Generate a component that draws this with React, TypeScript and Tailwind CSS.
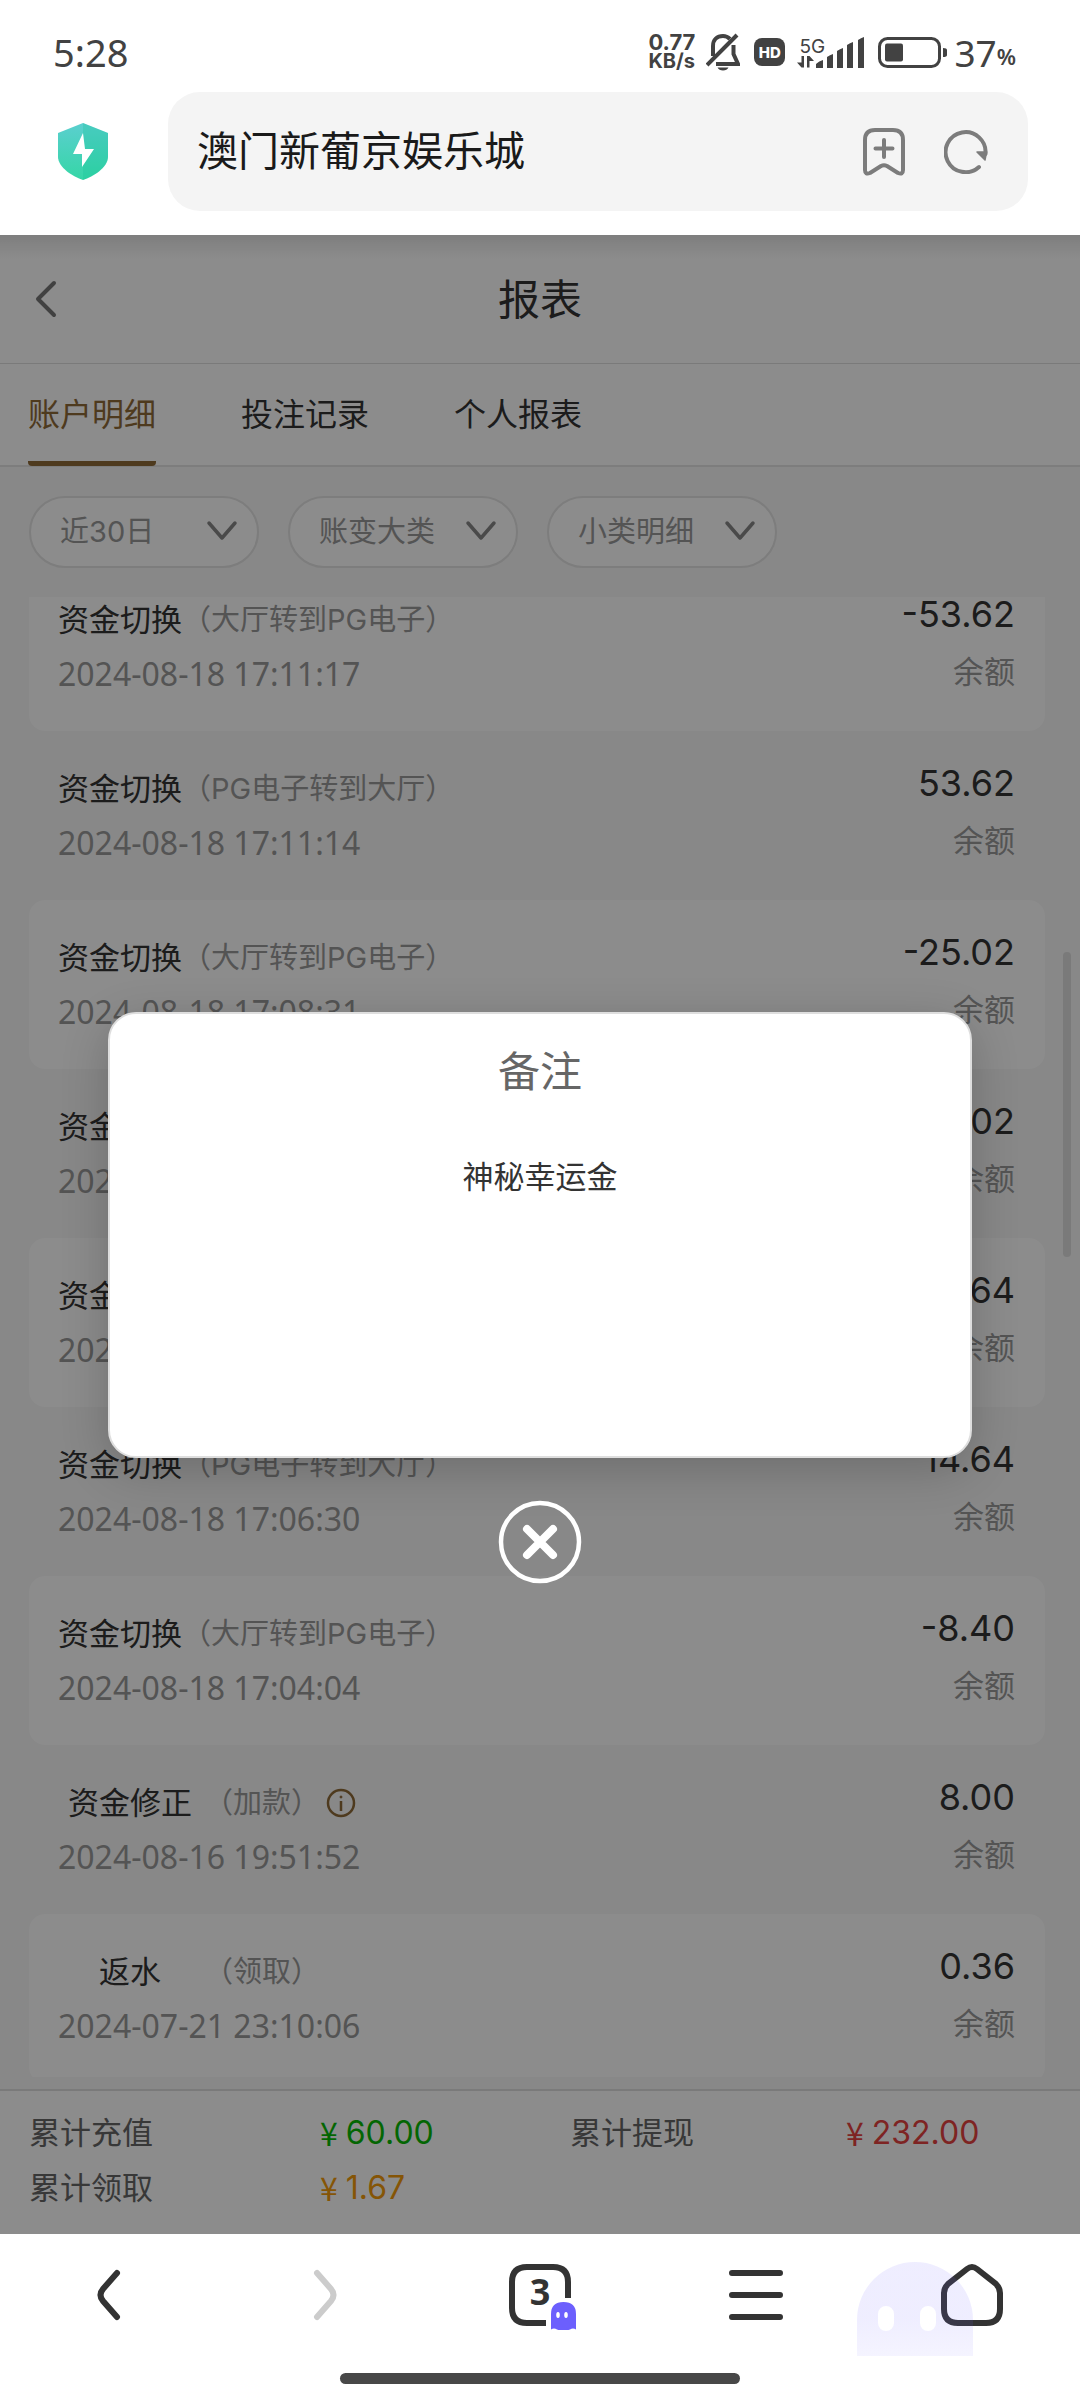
import clsx from 'clsx';
import { useState } from 'react';

type Transaction = {
  title: string;
  detail: string;
  time: string;
  amount: string;
  wide?: boolean;
  info?: boolean;
};

const tabs = ['账户明细', '投注记录', '个人报表'];

const filters = [
  { label: '时间', value: '近30日' },
  { label: '大类', value: '账变大类' },
  { label: '小类', value: '小类明细' },
];

const transactions: Transaction[] = [
  { title: '资金切换', detail: '（大厅转到PG电子）', time: '2024-08-18 17:11:17', amount: '-53.62' },
  { title: '资金切换', detail: '（PG电子转到大厅）', time: '2024-08-18 17:11:14', amount: '53.62' },
  { title: '资金切换', detail: '（大厅转到PG电子）', time: '2024-08-18 17:08:31', amount: '-25.02' },
  { title: '资金切换', detail: '（PG电子转到大厅）', time: '2024-08-18 17:08:28', amount: '25.02' },
  { title: '资金切换', detail: '（大厅转到PG电子）', time: '2024-08-18 17:06:33', amount: '-14.64' },
  { title: '资金切换', detail: '（PG电子转到大厅）', time: '2024-08-18 17:06:30', amount: '14.64' },
  { title: '资金切换', detail: '（大厅转到PG电子）', time: '2024-08-18 17:04:04', amount: '-8.40' },
  { title: '资金修正', detail: '（加款）', time: '2024-08-16 19:51:52', amount: '8.00', wide: true, info: true },
  { title: '返水', detail: '（领取）', time: '2024-07-21 23:10:06', amount: '0.36', wide: true },
];

const totals = [
  { label: '累计充值', value: '60.00', color: 'text-[#09bb07]' },
  { label: '累计提现', value: '232.00', color: 'text-[#e64340]' },
  { label: '累计领取', value: '1.67', color: 'text-[#f39b0c]' },
];

function StatusBar() {
  return (
    <div className="flex h-[92px] items-center justify-between pt-3 pr-16 pl-[53px] text-[#424242]">
      <time className="font-['Noto_Sans',sans-serif] text-[38px] leading-none">5:28</time>
      <div className="flex items-center">
        <div className="w-[58px] font-bold">
          <div className="text-[22px] leading-[19px]">0.77</div>
          <div className="text-[20px] leading-[19px]">KB/s</div>
        </div>
        <svg className="h-[38px] w-[34px]" viewBox="0 0 34 38" fill="none" stroke="currentColor" strokeWidth="4">
          <path d="M7 23V13C7 7 11 3 17 3c3 0 5 1 7 3" />
          <path d="M1 32 31 2" />
          <path d="M27.500 12v9l4.500 10H10" />
          <path d="M11.500 34.500h11q-1.500 3-5.500 3t-5.500-3z" fill="currentColor" stroke="none" />
        </svg>
        <div className="mr-3 ml-3.5 flex h-7 w-[31px] items-center justify-center rounded-lg bg-[#424242] text-[15px] leading-none font-extrabold text-white">
          HD
        </div>
        <div className="flex items-end">
          <div className="flex w-[19px] flex-col">
            <span className="pl-0.5 text-[19px] leading-[19px]">5G</span>
            <svg className="h-3 w-[17px]" viewBox="0 0 17 12" fill="currentColor">
              <path d="M4.500 0h2.500v11.500H4.500L0 6.500h4.500zM10 0h2.500l4.500 5h-4.500v6.500H10z" />
            </svg>
          </div>
          <svg className="h-[31px] w-12" viewBox="0 0 48 31" fill="currentColor">
            <path d="M0 27q3-3 7-4v8H0zM11 20q3-2 6-3v14h-6zM21 14q3-2 6-3v20h-6zM31 8q3-2 6-3v26h-6zM42 3q3-2 6-3v31h-6z" />
          </svg>
        </div>
        <svg className="ml-3.5 h-[31px] w-[70px]" viewBox="0 0 70 31" fill="currentColor">
          <rect x="1.500" y="1.500" width="60" height="28" rx="8" fill="none" stroke="currentColor" strokeWidth="3" />
          <rect x="7" y="6.500" width="18" height="18" rx="2" />
          <path d="M65 11q4 0 4 2v5q0 2-4 2z" />
        </svg>
        <span className="ml-1.5 font-['Noto_Sans',sans-serif] text-[37px] leading-none">37</span>
        <span className="self-end font-['Noto_Sans',sans-serif] text-[22px] leading-[30px] font-semibold">%</span>
      </div>
    </div>
  );
}

function AddressBar() {
  return (
    <div className="flex items-center pr-[52px] pb-6">
      <svg className="mx-[58px] h-[57px] w-[52px] shrink-0" viewBox="0 0 52 57">
        <defs>
          <linearGradient id="shield" x1="0" y1="0" x2="0" y2="1">
            <stop offset="0" stopColor="#5bcfcf" />
            <stop offset="1" stopColor="#35d6a6" />
          </linearGradient>
        </defs>
        <path d="M25 0 50 10v24c0 10-15 20-25 23C15 54 0 44 0 34V10z" fill="url(#shield)" />
        <path d="M25 0 50 10v24c0 10-15 20-25 23z" fill="#0fbf94" fillOpacity=".25" />
        <path d="M25 10 15 31h9v13l12-18h-9z" fill="#fff" />
      </svg>
      <div className="flex h-[119px] flex-1 items-center rounded-[32px] bg-[#f4f4f4] pr-10 pl-[29px] text-[#7c7c7c]">
        <input
          aria-label="地址栏"
          className="min-w-0 flex-1 bg-transparent text-[41px] text-[#1a1a1a] outline-none"
          defaultValue="澳门新葡京娱乐城"
        />
        <button aria-label="添加书签">
          <svg className="h-12 w-[42px]" viewBox="0 0 42 48" fill="none" stroke="currentColor" strokeWidth="4" strokeLinecap="round">
            <path
              strokeLinejoin="round"
              d="M2 12Q2 2 12 2H30Q40 2 40 12V42Q40 47 35 45L24 38Q21 36.500 18 38L7 45Q2 47 2 42z"
            />
            <path d="M21 12v17M12.500 20.500h17" />
          </svg>
        </button>
        <button aria-label="刷新" className="ml-[39px]">
          <svg className="h-11 w-11" viewBox="0 0 44 44" fill="none" stroke="currentColor" strokeWidth="4" strokeLinecap="round">
            <path d="M35 37A20 20 0 1 1 41.500 24" />
            <path d="M33 22h9.500l-1.500 8z" fill="currentColor" strokeWidth="1.500" strokeLinejoin="round" />
          </svg>
        </button>
      </div>
    </div>
  );
}

function Filter({ label, value }: { label: string; value: string }) {
  return (
    <div className="relative h-[72px] w-[230px]">
      <select
        aria-label={label}
        className="h-full w-full appearance-none rounded-full border-2 border-[#e3e3e3] bg-white pl-[29px] text-[29px] text-[#999] outline-none"
        defaultValue={value}
      >
        <option>{value}</option>
      </select>
      <svg
        className="pointer-events-none absolute top-6 right-[21px] h-[22px] w-8 text-[#888]"
        viewBox="0 0 32 22"
        fill="none"
        stroke="currentColor"
        strokeWidth="3.500"
        strokeLinecap="round"
        strokeLinejoin="round"
      >
        <path d="M3 3 16 18 29 3" />
      </svg>
    </div>
  );
}

function TransactionRow({ item, odd }: { item: Transaction; odd: boolean }) {
  return (
    <li className={clsx('flex justify-between rounded-2xl pr-[30px] pl-[29px]', odd && 'bg-white')}>
      <div className="pt-[31px] pb-[30px]">
        <div className="flex items-center leading-[53px]">
          <span className={clsx('text-[31px] text-[#333]', item.wide && 'mr-0.5 w-36 text-center')}>{item.title}</span>
          <span className="text-[29px] text-[#999]">{item.detail}</span>
          {item.info && (
            <button aria-label="备注" className="ml-1.5">
              <svg className="h-[30px] w-[30px] text-[#8f6a38]" viewBox="0 0 30 30" fill="none" stroke="currentColor" strokeWidth="2.500">
                <circle cx="15" cy="15" r="13" />
                <path d="M15 13v10" />
                <circle cx="15" cy="9" r="1" fill="currentColor" strokeWidth="1" />
              </svg>
            </button>
          )}
        </div>
        <time className="block font-['Noto_Sans',sans-serif] text-[32px] leading-[55px] text-[#999]">{item.time}</time>
      </div>
      <div className="pt-[23px] text-right leading-[58px]">
        <div className="text-[36px] text-[#333]">{item.amount}</div>
        <div className="text-[31px] text-[#999]">余额</div>
      </div>
    </li>
  );
}

function RemarkDialog({ onClose }: { onClose: () => void }) {
  return (
    <div className="absolute inset-0 flex items-center justify-center bg-black/45">
      <div
        role="dialog"
        aria-labelledby="remark-title"
        className="relative min-h-[446px] w-4/5 rounded-[28px] border-2 border-[#dedede] bg-white text-center shadow-[0_12px_48px_rgba(0,0,0,0.2)]"
      >
        <h2 id="remark-title" className="pt-[29px] text-[42px] leading-[58px] text-[#666]">
          备注
        </h2>
        <p className="pt-[52px] text-[31px] leading-[48px] text-[#333]">神秘幸运金</p>
        <div className="absolute top-full right-0 left-0 flex justify-center pt-11">
          <button aria-label="关闭" onClick={onClose}>
            <svg className="h-[84px] w-[84px] text-white" viewBox="0 0 84 84" fill="none" stroke="currentColor" strokeLinecap="round">
              <circle cx="42" cy="42" r="39" strokeWidth="4.500" />
              <path d="M29 29 55 55M55 29 29 55" strokeWidth="8" />
            </svg>
          </button>
        </div>
      </div>
    </div>
  );
}

function BrowserNav() {
  return (
    <nav className="bg-white pb-4 text-[#333]">
      <div className="grid h-[139px] grid-cols-5 justify-items-center pb-[17px]">
        <button aria-label="后退">
          <svg className="h-14 w-7" viewBox="0 0 28 56" fill="none" stroke="currentColor" strokeWidth="6" strokeLinecap="round">
            <path d="M23 6 9 22Q4 28 9 34L23 50" />
          </svg>
        </button>
        <button aria-label="前进" className="text-[#ccc]">
          <svg className="h-14 w-7" viewBox="0 0 28 56" fill="none" stroke="currentColor" strokeWidth="6" strokeLinecap="round">
            <path d="M7 6 21 22Q26 28 21 34L7 50" />
          </svg>
        </button>
        <button aria-label="标签页" className="relative">
          <svg className="h-[70px] w-[74px]" viewBox="0 0 74 70" fill="none">
            <path d="M65 38V22Q65 7 50 7H24Q9 7 9 22V48Q9 63 24 63H43" stroke="currentColor" strokeWidth="6" />
            <path
              d="M48 69V54Q48 42 60.500 42T73 54V69.500Q70 67.500 67 69.500 60.500 72 54 69.500 51 67.500 48 69.500z"
              fill="#6c5ffd"
            />
            <ellipse cx="55" cy="55" rx="1.800" ry="3" fill="#fff" />
            <ellipse cx="63" cy="55" rx="1.800" ry="3" fill="#fff" />
          </svg>
          <span className="absolute inset-0 flex items-center justify-center pb-1.5 font-['Noto_Sans',sans-serif] text-[36px] leading-none font-bold">
            3
          </span>
        </button>
        <button aria-label="菜单">
          <svg className="h-14 w-14" viewBox="0 0 56 56" fill="none" stroke="currentColor" strokeWidth="6" strokeLinecap="round">
            <path d="M4 6h48M4 28h48M4 50h48" />
          </svg>
        </button>
        <button aria-label="主页" className="relative">
          <svg className="h-[66px] w-[66px]" viewBox="0 0 66 66" fill="none" stroke="currentColor" strokeWidth="6">
            <path d="M28 7Q33 3 38 7L57 22Q61 26 61 31V47Q61 61 47 61H19Q5 61 5 47V31Q5 26 9 22z" />
          </svg>
          <svg className="pointer-events-none absolute top-7 -left-[82px] h-[94px] w-[116px]" viewBox="0 0 116 94">
            <defs>
              <linearGradient id="ghost" x1="0" y1="0" x2="0" y2="1">
                <stop offset=".6" stopColor="#6c5ffd" stopOpacity=".11" />
                <stop offset="1" stopColor="#6c5ffd" stopOpacity=".07" />
              </linearGradient>
            </defs>
            <path
              fillRule="evenodd"
              fill="url(#ghost)"
              d="M0 94V58a58 58 0 0 1 116 0V94zM21 52v9a8 8 0 0 0 16 0v-9a8 8 0 0 0-16 0zM63 52v9a8 8 0 0 0 16 0v-9a8 8 0 0 0-16 0z"
            />
          </svg>
        </button>
      </div>
      <div className="mx-auto h-[11px] w-[37%] rounded-full bg-[#484848]" />
    </nav>
  );
}

function App() {
  const [currentTab, setCurrentTab] = useState(tabs[0]);
  const [remarkOpen, setRemarkOpen] = useState(true);

  return (
    <div className="flex h-screen flex-col bg-white font-['Inter','Noto_Sans_CJK_SC',sans-serif]">
      <header>
        <StatusBar />
        <AddressBar />
      </header>

      <main className="relative flex min-h-0 flex-1 flex-col bg-[#f7f7f7]">
        <div className="absolute top-0 right-0 left-0 h-6 bg-linear-to-b from-black/10 to-transparent" />
        <div className="grid h-[129px] grid-cols-[1fr_auto_1fr] items-center border-b border-[#dedede] bg-white px-7">
          <button aria-label="返回">
            <svg className="h-10 w-8 text-[#777]" viewBox="0 0 32 40" fill="none" stroke="currentColor" strokeWidth="4" strokeLinecap="round" strokeLinejoin="round">
              <path d="M26 4 10 20 26 36" />
            </svg>
          </button>
          <h1 className="text-[42px] text-[#333]">报表</h1>
        </div>

        <div role="tablist" className="flex h-[103px] gap-[85px] border-b-2 border-[#e3e3e3] bg-white px-7">
          {tabs.map(tab => (
            <button
              className={clsx(
                '-mb-px rounded-sm border-b-[5px] pt-1 text-[32px]',
                tab === currentTab ? 'border-[#8f6a38] text-[#8f6a38]' : 'border-transparent text-[#333]',
              )}
              aria-selected={tab === currentTab}
              key={tab}
              onClick={() => setCurrentTab(tab)}
              role="tab"
            >
              {tab}
            </button>
          ))}
        </div>

        <div className="flex gap-[29px] px-[29px] pt-[29px] pb-[29px]">
          {filters.map(filter => (
            <Filter key={filter.label} {...filter} />
          ))}
        </div>

        <div className="relative min-h-0 flex-1">
          <div className="h-full overflow-hidden pr-[35px] pl-[29px]">
            <ul className="-mt-[35px]">
              {transactions.map((item, index) => (
                <TransactionRow item={item} key={item.time} odd={index % 2 === 0} />
              ))}
            </ul>
          </div>
          <div className="absolute top-[24%] right-[9px] h-[305px] w-2 rounded-full bg-[#dedede]" />
        </div>

        <dl className="mt-3 grid grid-cols-[291fr_250fr_276fr_234fr] border-t-2 border-[#dedede] bg-white pt-3.5 pb-[19px] pl-[29px] leading-[55px]">
          {totals.map(total => (
            <div className="contents" key={total.label}>
              <dt className="text-[31px] text-[#666]">{total.label}</dt>
              <dd className={clsx('flex items-center text-[32px]', total.color)}>
                <span className="mr-2 font-['Noto_Sans_CJK_SC',sans-serif]">¥</span>
                {total.value}
              </dd>
            </div>
          ))}
        </dl>

        {remarkOpen && <RemarkDialog onClose={() => setRemarkOpen(false)} />}
      </main>

      <BrowserNav />
    </div>
  );
}

export default App;
